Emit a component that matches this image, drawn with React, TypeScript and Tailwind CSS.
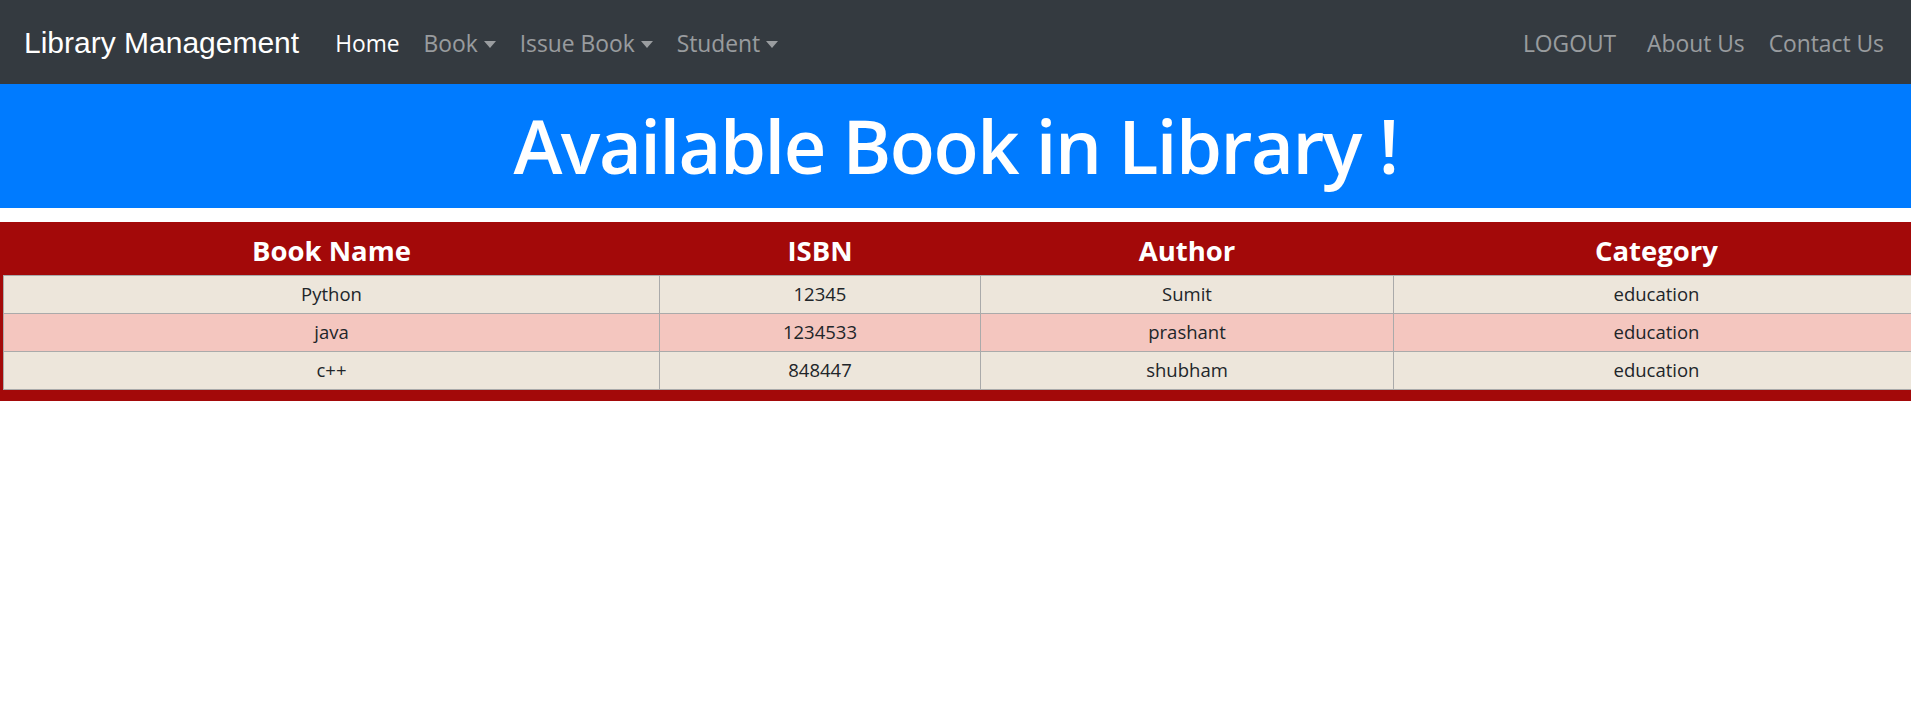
import type { ReactNode } from 'react'

type Book = {
  name: string
  isbn: string
  author: string
  category: string
}

const BOOKS: Book[] = [
  { name: 'Python', isbn: '12345', author: 'Sumit', category: 'education' },
  { name: 'java', isbn: '1234533', author: 'prashant', category: 'education' },
  { name: 'c++', isbn: '848447', author: 'shubham', category: 'education' },
]

// column widths, measured from the screenshot
const COLS = ['w-[656px]', 'w-[321px]', 'w-[413px]', 'w-[526px]']

function Caret() {
  return (
    <span className="ml-[6px] inline-block w-0 h-0 border-l-[6.5px] border-r-[6.5px] border-t-[7px] border-l-transparent border-r-transparent border-t-current translate-y-[1px]" />
  )
}

function NavLink({
  children,
  active = false,
  dropdown = false,
  className = '',
}: {
  children: ReactNode
  active?: boolean
  dropdown?: boolean
  className?: string
}) {
  return (
    <a
      href="#"
      className={`flex items-center px-[12px] text-[22.8px] leading-none translate-y-[2px] ${
        active ? 'text-white' : 'text-white/50'
      } ${className}`}
    >
      {children}
      {dropdown && <Caret />}
    </a>
  )
}

export default function App() {
  return (
    <div className="min-h-[720px] bg-white font-['Open_Sans',sans-serif] text-[#212529]">
      {/* navbar */}
      <nav className="h-[84px] bg-[#343a40] flex items-center pl-[24px] pr-[15px]">
        <a
          href="#"
          className="mr-[24px] text-[30px] leading-none text-white font-['Liberation_Sans',Arial,sans-serif] translate-y-[1px]"
        >
          Library Management
        </a>
        <div className="flex items-center">
          <NavLink active>Home</NavLink>
          <NavLink dropdown>Book</NavLink>
          <NavLink dropdown>Issue Book</NavLink>
          <NavLink dropdown>Student</NavLink>
        </div>
        <div className="ml-auto flex items-center">
          <NavLink className="mr-[7px]">LOGOUT</NavLink>
          <NavLink>About Us</NavLink>
          <NavLink>Contact Us</NavLink>
        </div>
      </nav>

      {/* banner */}
      <div className="h-[124px] bg-[#007bff] flex items-center justify-center">
        <h1 className="text-[74px] font-semibold leading-none text-white tracking-[-1.5px]">
          Available Book in Library !
        </h1>
      </div>

      {/* table */}
      <div className="mt-[14px] overflow-hidden">
        <div className="w-[1922px] bg-[#a30909] pl-[3px] pb-[11px]">
          <table className="border-collapse table-fixed w-[1916px]">
            <thead>
              <tr className="h-[53px]">
                {['Book Name', 'ISBN', 'Author', 'Category'].map((h, i) => (
                  <th
                    key={h}
                    className={`${COLS[i]} text-center text-[27.5px] font-bold text-white leading-none pt-[4px]`}
                  >
                    {h}
                  </th>
                ))}
              </tr>
            </thead>
            <tbody>
              {BOOKS.map((b, i) => (
                <tr
                  key={b.name}
                  className={`h-[38px] ${i % 2 === 1 ? 'bg-[#f4c6bf]' : 'bg-[#ede6db]'}`}
                >
                  {[b.name, b.isbn, b.author, b.category].map((v, j) => (
                    <td
                      key={j}
                      className="border border-[#aaaaaa] text-center text-[18.5px] leading-none p-0 pt-[1px]"
                    >
                      {v}
                    </td>
                  ))}
                </tr>
              ))}
            </tbody>
          </table>
        </div>
      </div>
    </div>
  )
}
